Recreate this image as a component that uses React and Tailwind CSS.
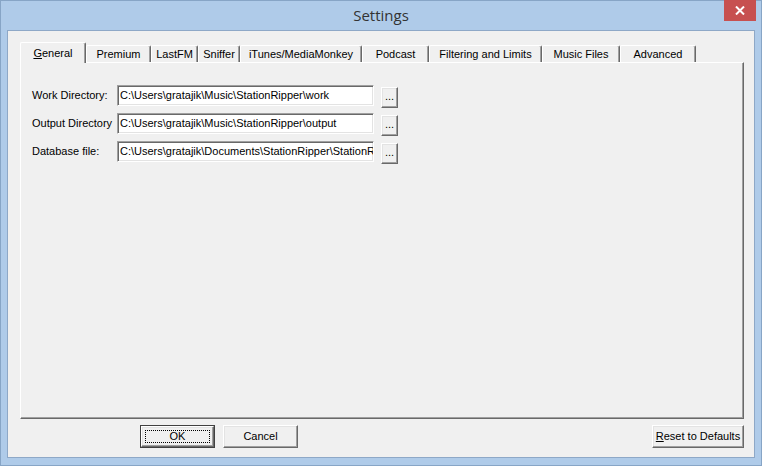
import React from 'react';

const tabs = [
  { label: 'General', w: 66, accel: true },
  { label: 'Premium', w: 65 },
  { label: 'LastFM', w: 47 },
  { label: 'Sniffer', w: 42 },
  { label: 'iTunes/MediaMonkey', w: 122 },
  { label: 'Podcast', w: 67 },
  { label: 'Filtering and Limits', w: 113 },
  { label: 'Music Files', w: 78 },
  { label: 'Advanced', w: 76 },
];

const fields = [
  { label: 'Work Directory:', value: 'C:\\Users\\gratajik\\Music\\StationRipper\\work' },
  { label: 'Output Directory', value: 'C:\\Users\\gratajik\\Music\\StationRipper\\output' },
  { label: 'Database file:', value: 'C:\\Users\\gratajik\\Documents\\StationRipper\\StationRipper.db' },
];

const raised =
  'bg-[#f0f0f0] border border-t-white border-l-white border-r-[#696969] border-b-[#696969] shadow-[inset_-1px_-1px_0_#a0a0a0,inset_1px_1px_0_#e3e3e3]';

function Tab({ tab, selected }) {
  if (selected) {
    return (
      <div
        className="relative z-10 -mb-px h-[21px] flex items-center justify-center bg-[#f0f0f0] border-l border-t border-white border-r border-r-[#696969] rounded-t-[2px] shadow-[inset_-1px_0_0_#a0a0a0]"
        style={{ width: tab.w }}
      >
        <span><span className="underline">G</span>eneral</span>
      </div>
    );
  }
  return (
    <div
      className="h-[17px] flex items-center justify-center bg-[#f0f0f0] border-l border-t border-white border-r border-r-[#696969] rounded-t-[2px] shadow-[inset_-1px_0_0_#a0a0a0]"
      style={{ width: tab.w }}
    >
      <span className="pt-px">{tab.label}</span>
    </div>
  );
}

export default function App() {
  return (
    <div
      className="w-[762px] h-[466px] bg-[#afcbe9] border border-[#87a5c6] flex flex-col text-[11px] text-black"
      style={{ fontFamily: '"Liberation Sans", Arial, sans-serif' }}
    >
      <div className="relative h-[29px] flex items-center justify-center">
        <span className="text-[15px] text-[#333] pb-[1px]" style={{ fontFamily: '"Open Sans", "Noto Sans", sans-serif' }}>
          Settings
        </span>
        <div className="absolute right-[5px] -top-px w-[32px] h-[21px] bg-[#c75050] flex items-center justify-center">
          <svg width="10" height="9" viewBox="0 0 10 9">
            <path d="M1 0.5 L9 8.5 M9 0.5 L1 8.5" stroke="white" strokeWidth="2" />
          </svg>
        </div>
      </div>

      <div className="mx-[6px] mb-[7px] flex-1 border border-[#8ea8c7] bg-[#f0f0f0] flex flex-col pl-[12px] pr-[10px] pt-[11px]">
        <div className="flex items-end">
          {tabs.map((t, i) => (
            <Tab key={t.label} tab={t} selected={i === 0} />
          ))}
        </div>

        <div className="h-[357px] border border-t-white border-l-white border-r-[#696969] border-b-[#696969] shadow-[inset_-1px_-1px_0_#a0a0a0] pt-[22px] pl-[11px]">
          <div className="flex flex-col gap-[5px]">
            {fields.map(f => (
              <div key={f.label} className="flex items-start">
                <div className="w-[85px] h-[21px] flex items-center">{f.label}</div>
                <div className="w-[257px] h-[21px] bg-white border border-t-[#a0a0a0] border-l-[#a0a0a0] border-r-white border-b-white shadow-[inset_1px_1px_0_#696969,inset_-1px_-1px_0_#e3e3e3] flex items-center pl-[2px] overflow-hidden whitespace-nowrap">
                  {f.value}
                </div>
                <div className={`ml-[7px] mt-[2px] w-[17px] h-[21px] flex items-end justify-center pb-[3px] ${raised}`}>
                  ...
                </div>
              </div>
            ))}
          </div>
        </div>

        <div className="flex items-start mt-[6px]">
          <div className="ml-[120px] w-[75px] h-[23px] border border-[#404040] relative">
            <div className={`w-full h-full flex items-center justify-center ${raised}`}>OK</div>
            <span className="absolute inset-[4px] border border-dotted border-black"></span>
          </div>
          <div className={`ml-[8px] w-[75px] h-[23px] flex items-center justify-center ${raised}`}>Cancel</div>
          <div className={`ml-auto w-[92px] h-[23px] flex items-center justify-center ${raised}`}>
            <span><span className="underline">R</span>eset to Defaults</span>
          </div>
        </div>
      </div>
    </div>
  );
}
